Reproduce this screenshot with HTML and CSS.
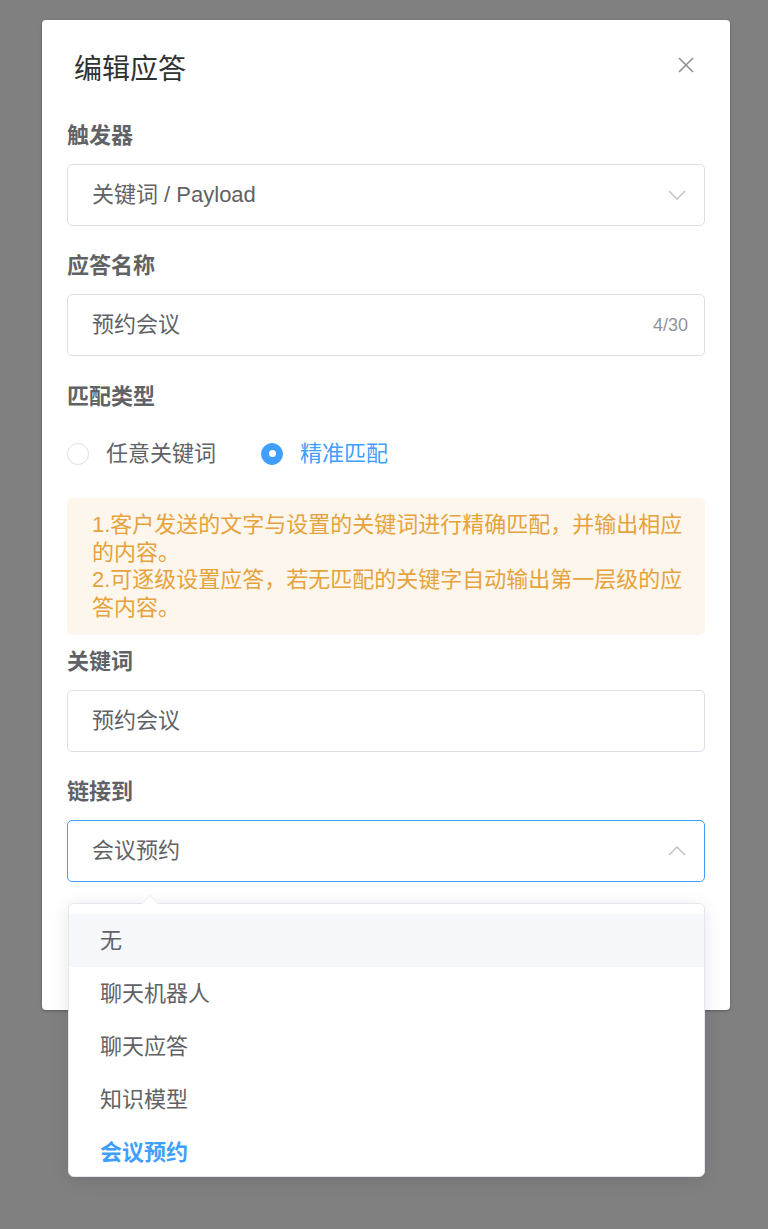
FILE: index.html
```html
<!DOCTYPE html>
<html lang="zh-CN">
<head>
<meta charset="utf-8">
<title>编辑应答</title>
<link rel="stylesheet" href="styles.css">
</head>
<body>
<div class="dialog">
  <div class="dialog-header">
    <span class="dialog-title">编辑应答</span>
    <button class="dialog-close" aria-label="关闭">
      <svg width="16" height="16" viewBox="0 0 16 16"><path d="M1 1 L15 15 M15 1 L1 15" stroke="#909399" stroke-width="1.7" fill="none"/></svg>
    </button>
  </div>
  <div class="dialog-body">
    <div class="form-item">
      <div class="form-label">触发器</div>
      <div class="input">
        <span class="input-text">关键词 / Payload</span>
        <svg class="chevron" width="18" height="10" viewBox="0 0 18 10"><path d="M1 1 L9 9 L17 1" stroke="#c0c4cc" stroke-width="1.5" fill="none"/></svg>
      </div>
    </div>
    <div class="form-item">
      <div class="form-label">应答名称</div>
      <div class="input">
        <span class="input-text">预约会议</span>
        <span class="count">4/30</span>
      </div>
    </div>
    <div class="form-item radio-item">
      <div class="form-label">匹配类型</div>
      <div class="radio-group">
        <label class="radio"><span class="radio-circle"></span><span class="radio-label">任意关键词</span></label>
        <label class="radio is-checked"><span class="radio-circle"></span><span class="radio-label">精准匹配</span></label>
      </div>
    </div>
    <div class="alert">
      <p>1.客户发送的文字与设置的关键词进行精确匹配，并输出相应的内容。</p>
      <p>2.可逐级设置应答，若无匹配的关键字自动输出第一层级的应答内容。</p>
    </div>
    <div class="form-item">
      <div class="form-label">关键词</div>
      <div class="input">
        <span class="input-text">预约会议</span>
      </div>
    </div>
    <div class="form-item">
      <div class="form-label">链接到</div>
      <div class="select-wrap">
        <div class="input is-focus">
          <span class="input-text">会议预约</span>
          <svg class="chevron" width="18" height="10" viewBox="0 0 18 10"><path d="M1 9 L9 1 L17 9" stroke="#c0c4cc" stroke-width="1.5" fill="none"/></svg>
        </div>
        <div class="dropdown">
          <span class="dropdown-arrow"></span>
          <ul class="dropdown-list">
            <li class="dropdown-item is-hover">无</li>
            <li class="dropdown-item">聊天机器人</li>
            <li class="dropdown-item">聊天应答</li>
            <li class="dropdown-item">知识模型</li>
            <li class="dropdown-item is-selected">会议预约</li>
          </ul>
        </div>
      </div>
    </div>
  </div>
</div>
</body>
</html>
```

FILE: styles.css
```css
* { box-sizing: border-box; }
html, body {
  margin: 0;
  padding: 0;
  background: #808080;
  font-family: "Liberation Sans", "Noto Sans CJK SC", sans-serif;
}
body { height: 1229px; overflow: hidden; }

.dialog {
  width: 688px;
  height: 990px;
  margin: 20px 0 0 42px;
  background: #fff;
  border-radius: 4px;
  box-shadow: 0 1px 3px rgba(0,0,0,0.3);
  position: relative;
}

.dialog-header {
  display: flex;
  justify-content: space-between;
  align-items: flex-start;
  padding: 32px 36px 0 32px;
}
.dialog-title {
  font-size: 28px;
  line-height: 36px;
  color: #303133;
}
.dialog-close {
  border: 0;
  background: none;
  padding: 0;
  margin-top: 5px;
  width: 16px;
  height: 16px;
  display: block;
}
.dialog-close svg { display: block; }

.dialog-body {
  padding: 33px 25px 0 25px;
}

.form-item { margin-bottom: 25px; }
.form-item:nth-child(2) { margin-bottom: 26px; }
.form-label {
  font-size: 22px;
  line-height: 30px;
  font-weight: bold;
  color: #606266;
  margin-bottom: 13px;
}

.input {
  height: 62px;
  border: 1px solid #dcdfe6;
  border-radius: 5px;
  display: flex;
  align-items: center;
  padding: 0 16px 0 24px;
}
.input.is-focus { border-color: #409eff; }
.input-text {
  flex: 1;
  font-size: 22px;
  color: #606266;
  line-height: 30px;
}
.count {
  font-size: 18px;
  color: #909399;
}
.chevron { display: block; margin-right: 2px; }

.radio-item { margin-bottom: 16px; }
.radio-group {
  height: 57px;
  display: flex;
  align-items: center;
  gap: 45px;
}
.radio {
  display: flex;
  align-items: center;
}
.radio-circle {
  width: 22px;
  height: 22px;
  border: 1px solid #dcdfe6;
  border-radius: 50%;
  display: flex;
  align-items: center;
  justify-content: center;
}
.radio-label {
  margin-left: 17px;
  font-size: 22px;
  line-height: 30px;
  color: #606266;
}
.radio.is-checked .radio-circle {
  background: #409eff;
  border-color: #409eff;
}
.radio.is-checked .radio-circle::after {
  content: "";
  width: 7px;
  height: 7px;
  border-radius: 50%;
  background: #fff;
}
.radio.is-checked .radio-label { color: #409eff; }

.alert {
  background: #fdf6ec;
  border-radius: 5px;
  padding: 13px 13px 13px 25px;
  margin-bottom: 12px;
}
.alert p {
  margin: 0;
  font-size: 22px;
  line-height: 27.7px;
  color: #e6a23c;
}

.select-wrap { position: relative; }
.dropdown {
  position: absolute;
  left: 1px;
  right: 0;
  top: calc(100% + 21px);
  height: 274px;
  background: #fff;
  border: 1px solid #e4e7ed;
  border-radius: 6px;
  box-shadow: 0 3px 18px rgba(0,0,0,0.1);
  z-index: 10;
}
.dropdown-arrow {
  position: absolute;
  top: -9px;
  left: 72px;
  width: 0;
  height: 0;
  border-left: 9px solid transparent;
  border-right: 9px solid transparent;
  border-bottom: 9px solid #e4e7ed;
}
.dropdown-arrow::after {
  content: "";
  position: absolute;
  left: -8px;
  top: 1px;
  border-left: 8px solid transparent;
  border-right: 8px solid transparent;
  border-bottom: 8px solid #fff;
}
.dropdown-list {
  list-style: none;
  margin: 0;
  padding: 10px 0 0 0;
  height: 100%;
  overflow: hidden;
  border-radius: 6px;
}
.dropdown-item {
  height: 53px;
  line-height: 53px;
  padding-left: 31px;
  font-size: 22px;
  color: #606266;
}
.dropdown-item.is-hover { background: #f5f7fa; }
.dropdown-item.is-selected {
  color: #409eff;
  font-weight: bold;
}
```
